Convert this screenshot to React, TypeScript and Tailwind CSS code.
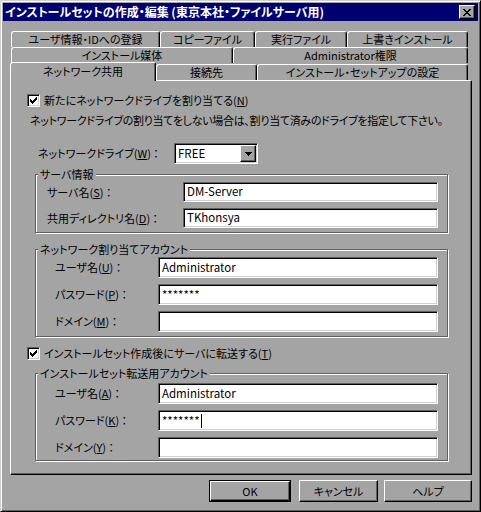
import React from "react";

const raised =
  "border border-t-white border-l-white border-r-black border-b-black shadow-[inset_-1px_-1px_#606060]";
const sunken =
  "border border-t-[#606060] border-l-[#606060] border-r-white border-b-white bg-white shadow-[inset_1px_1px_#000,inset_-1px_-1px_#d0d0d0]";
const etched = "border border-[#606060] shadow-[inset_1px_1px_#fff,1px_1px_#fff]";

function Mn({ text, k, tail = "" }: { text: string; k: string; tail?: string }) {
  return (
    <span className="whitespace-nowrap">
      {text}(<u className="underline-offset-1">{k}</u>){tail}
    </span>
  );
}

function CheckBox() {
  return (
    <div className={`flex h-[13px] w-[13px] shrink-0 items-center justify-center ${sunken}`}>
      <svg width="7" height="7" viewBox="0 0 7 7" shapeRendering="crispEdges">
        <path
          d="M6 0h1v1H6z M5 1h2v1H5z M0 2h1v1H0z M4 2h3v1H4z M0 3h2v1H0z M3 3h3v1H3z M0 4h5v1H0z M1 5h3v1H1z M2 6h1v1H2z"
          fill="#000"
        />
      </svg>
    </div>
  );
}

function Tab({ label, w, active }: { label: string; w: string; active?: boolean }) {
  return (
    <div
      className={`flex ${w} shrink-0 items-center justify-center rounded-t-[3px] border-l border-t border-r border-l-white border-t-white border-r-black shadow-[inset_-1px_0_#606060] ${
        active ? "relative z-10 -mt-px -mb-px h-[19px] bg-[#a4a4a4] pb-[2px]" : "h-[16px]"
      }`}
    >
      <span className="whitespace-nowrap leading-none">{label}</span>
    </div>
  );
}

function TextBox({ value, w, h, caret }: { value: string; w: string; h: string; caret?: boolean }) {
  return (
    <div className={`flex ${w} ${h} shrink-0 items-center pl-[3px] text-[11.5px] ${sunken}`}>
      <span className="whitespace-nowrap leading-none">{value}</span>
      {caret && <span className="ml-px h-[14px] w-px bg-black" />}
    </div>
  );
}

function Row({
  label,
  labelW,
  pl,
  value,
  inputW,
  h,
  caret,
}: {
  label: React.ReactNode;
  labelW: string;
  pl: string;
  value: string;
  inputW: string;
  h: string;
  caret?: boolean;
}) {
  return (
    <div className={`flex items-center ${pl}`}>
      <div className={`${labelW} shrink-0 leading-none`}>{label}</div>
      <TextBox value={value} w={inputW} h={h} caret={caret} />
    </div>
  );
}

function Group({ title, h, pt, children }: { title: string; h: string; pt: string; children: React.ReactNode }) {
  return (
    <div className={`relative ml-[24px] w-[413px] ${h} ${etched} ${pt} flex flex-col gap-[6px]`}>
      <span className="absolute -top-[8px] left-[2px] bg-[#a4a4a4] px-[2px] leading-[14px]">{title}</span>
      {children}
    </div>
  );
}

function Button({ label, w, def }: { label: string; w: string; def?: boolean }) {
  const inner = (
    <div className={`flex h-full w-full items-center justify-center ${raised}`}>
      <span className="leading-none">{label}</span>
    </div>
  );
  return def ? (
    <div className={`${w} h-[22px] border border-black`}>{inner}</div>
  ) : (
    <div className={`${w} h-[22px]`}>{inner}</div>
  );
}

export default function App() {
  return (
    <div className="flex h-[512px] w-[481px] flex-col border border-t-[#d0d0d0] border-l-[#d0d0d0] border-r-black border-b-black bg-[#a4a4a4] p-[2px] font-['Noto_Sans_CJK_JP',sans-serif] text-[11px] text-black shadow-[inset_1px_1px_#fff,inset_-1px_-1px_#606060] [font-feature-settings:'palt']">
      {/* title bar */}
      <div className="flex h-[18px] shrink-0 items-center bg-[#000070] pl-[2px] pr-[3px]">
        <span className="whitespace-nowrap text-[12px] font-bold leading-none text-white">
          インストールセットの作成・編集 (東京本社・ファイルサーバ用)
        </span>
        <div className={`ml-auto flex h-[14px] w-[16px] items-center justify-center bg-[#a4a4a4] ${raised}`}>
          <svg width="8" height="7" viewBox="0 0 8 7" shapeRendering="crispEdges">
            <path
              d="M0 0h2v1H0z M6 0h2v1H6z M1 1h2v1H1z M5 1h2v1H5z M2 2h4v1H2z M3 3h2v1H3z M2 4h4v1H2z M1 5h2v1H1z M5 5h2v1H5z M0 6h2v1H0z M6 6h2v1H6z"
              fill="#000"
            />
          </svg>
        </div>
      </div>

      {/* tabs */}
      <div className="mt-[10px] ml-[8px] flex">
        <Tab label="ユーザ情報・IDへの登録" w="w-[149px]" />
        <Tab label="コピーファイル" w="w-[95px]" />
        <Tab label="実行ファイル" w="w-[92px]" />
        <Tab label="上書きインストール" w="w-[121px]" />
      </div>
      <div className="ml-[8px] flex">
        <Tab label="インストール媒体" w="w-[222px]" />
        <Tab label="Administrator権限" w="w-[235px]" />
      </div>
      <div className="ml-[7px] flex h-[17px] items-end">
        <Tab label="ネットワーク共用" w="w-[146px]" active />
        <Tab label="接続先" w="w-[101px]" />
        <Tab label="インストール・セットアップの設定" w="w-[211px]" />
      </div>

      {/* panel */}
      <div className={`ml-[7px] flex w-[462px] flex-col pb-[13px] ${raised}`}>
        <div className="mt-[12px] ml-[16px] flex h-[15px] items-center gap-[4px]">
          <CheckBox />
          <Mn text="新たにネットワークドライブを割り当てる" k="N" />
        </div>
        <div className="mt-[4px] ml-[19px] flex h-[16px] items-center whitespace-nowrap tracking-[-0.3px]">
          ネットワークドライブの割り当てをしない場合は、割り当て済みのドライブを指定して下さい。
        </div>
        <div className="mt-[15px] ml-[27px] flex items-center">
          <div className="w-[136px] leading-none">
            <Mn text="ネットワークドライブ" k="W" tail=" ：" />
          </div>
          <div className={`flex h-[21px] w-[84px] items-center pl-[3px] text-[11.5px] ${sunken}`}>
            <span className="leading-none">FREE</span>
            <div className={`mr-px ml-auto flex h-[17px] w-[16px] items-center justify-center bg-[#a4a4a4] ${raised}`}>
              <svg width="7" height="4" viewBox="0 0 7 4" shapeRendering="crispEdges">
                <path d="M0 0h7v1H0z M1 1h5v1H1z M2 2h3v1H2z M3 3h1v1H3z" fill="#000" />
              </svg>
            </div>
          </div>
        </div>

        <div className="mt-[10px]">
          <Group title="サーバ情報" h="h-[59px]" pt="pt-[7px]">
            <Row label={<Mn text="サーバ名" k="S" tail=" ：" />} labelW="w-[136px]" pl="pl-[11px]" value="DM-Server" inputW="w-[255px]" h="h-[20px]" />
            <Row label={<Mn text="共用ディレクトリ名" k="D" tail=" ：" />} labelW="w-[136px]" pl="pl-[11px]" value="TKhonsya" inputW="w-[255px]" h="h-[20px]" />
          </Group>
        </div>

        <div className="mt-[16px]">
          <Group title="ネットワーク割り当てアカウント" h="h-[88px]" pt="pt-[7px]">
            <Row label={<Mn text="ユーザ名" k="U" tail=" ：" />} labelW="w-[103px]" pl="pl-[19px]" value="Administrator" inputW="w-[280px]" h="h-[21px]" />
            <Row label={<Mn text="パスワード" k="P" tail=" ：" />} labelW="w-[103px]" pl="pl-[19px]" value="*******" inputW="w-[280px]" h="h-[21px]" />
            <Row label={<Mn text="ドメイン" k="M" tail=" ：" />} labelW="w-[103px]" pl="pl-[19px]" value="" inputW="w-[280px]" h="h-[21px]" />
          </Group>
        </div>

        <div className="mt-[9px] ml-[16px] flex h-[15px] items-center gap-[4px]">
          <CheckBox />
          <Mn text="インストールセット作成後にサーバに転送する" k="T" />
        </div>

        <div className="mt-[12px]">
          <Group title="インストールセット転送用アカウント" h="h-[88px]" pt="pt-[9px]">
            <Row label={<Mn text="ユーザ名" k="A" tail=" ：" />} labelW="w-[103px]" pl="pl-[19px]" value="Administrator" inputW="w-[280px]" h="h-[21px]" />
            <Row label={<Mn text="パスワード" k="K" tail=" ：" />} labelW="w-[103px]" pl="pl-[19px]" value="*******" inputW="w-[280px]" h="h-[21px]" caret />
            <Row label={<Mn text="ドメイン" k="Y" tail=" ：" />} labelW="w-[103px]" pl="pl-[19px]" value="" inputW="w-[280px]" h="h-[21px]" />
          </Group>
        </div>
      </div>

      {/* buttons */}
      <div className="mt-[5px] ml-[206px] flex">
        <Button label="OK" w="w-[82px]" def />
        <div className="ml-[8px]">
          <Button label="キャンセル" w="w-[79px]" />
        </div>
        <div className="ml-[6px]">
          <Button label="ヘルプ" w="w-[88px]" />
        </div>
      </div>
    </div>
  );
}
